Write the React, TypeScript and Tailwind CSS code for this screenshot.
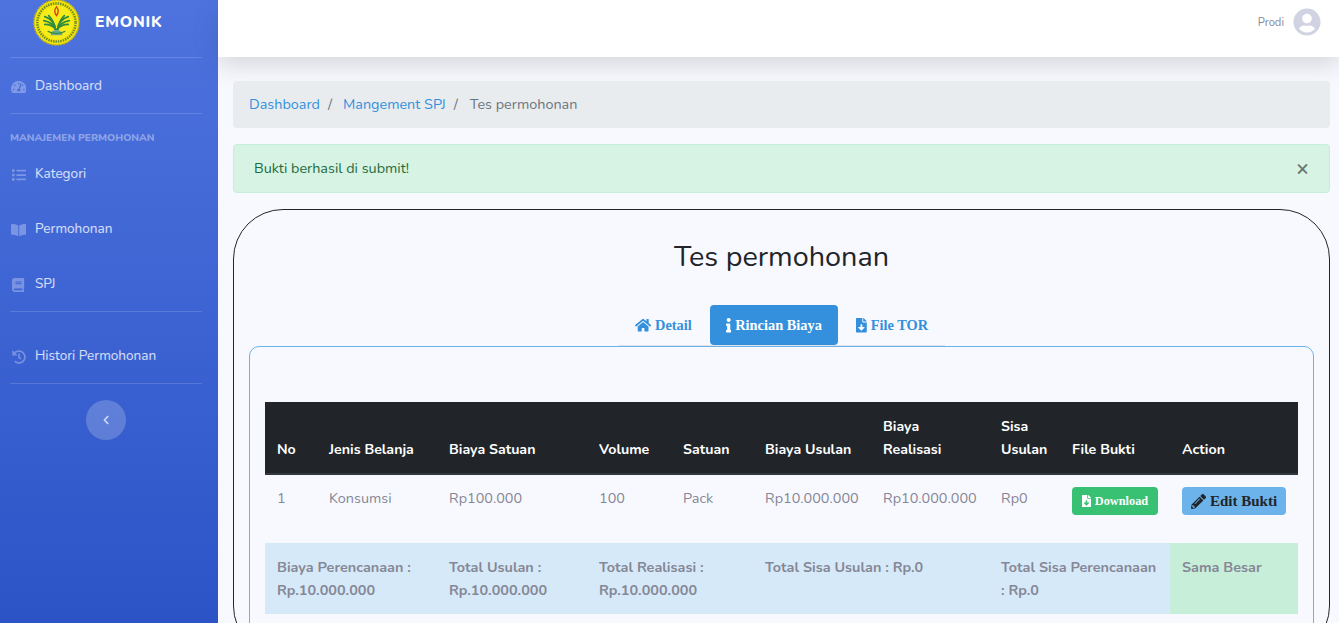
import {
  FaBook,
  FaBookOpen,
  FaChevronLeft,
  FaFileDownload,
  FaHistory,
  FaHome,
  FaInfo,
  FaList,
  FaPencilAlt,
  FaTachometerAlt,
  FaUserCircle,
} from 'react-icons/fa'
import type { ReactNode } from 'react'

function Logo() {
  return (
    <svg viewBox="0 0 48 48" className="h-[47px] w-[47px] shrink-0">
      <circle cx="24" cy="24" r="23" fill="#f2e60c" stroke="#c4b40c" strokeWidth="1.5" strokeDasharray="2 1" />
      <circle cx="24" cy="24" r="19.5" fill="none" stroke="#6f8a2a" strokeWidth="2.5" strokeDasharray="1.5 1" />
      <circle cx="24" cy="24" r="17" fill="#f7ec1a" />
      <path d="M24 8c-2.5 3-2.5 5.5 0 9 2.500-3.500 2.500-6 0-9z" fill="#f7ec1a" stroke="#d8401f" strokeWidth="1.4" />
      <g stroke="#2f8c3c" strokeWidth="1.8" fill="none" strokeLinecap="round">
        <path d="M23 31c-1-6-5-11-11-13" />
        <path d="M23 31c-2-5-6-8-12-9" />
        <path d="M23 31c-2-3-6-5-11-5" />
        <path d="M23 31c-1-5-3-10-7-14" />
        <path d="M25 31c1-6 5-11 11-13" />
        <path d="M25 31c2-5 6-8 12-9" />
        <path d="M25 31c2-3 6-5 11-5" />
        <path d="M25 31c1-5 3-10 7-14" />
      </g>
      <path d="M18 37c0-7 12-7 12 0z" fill="#6fa88f" />
      <path d="M15 33c5 3 13 3 18 0" stroke="#2f8c3c" strokeWidth="1.2" fill="none" />
    </svg>
  )
}

function NavItem({ icon, label }: { icon: ReactNode; label: string }) {
  return (
    <div className="flex h-[55px] items-center pl-[11px] pt-[2px] text-[13.6px] text-white/80">
      <span className="mr-[9px] flex w-[15px] justify-center text-white/30">{icon}</span>
      <span>{label}</span>
    </div>
  )
}

function Divider() {
  return <hr className="ml-[10px] mr-[16px] border-t border-white/15" />
}

function Sidebar() {
  return (
    <aside className="flex h-full w-[218px] shrink-0 flex-col bg-gradient-to-b from-[#4e73df] to-[#2d54c7]">
      <div className="flex h-[57px] items-center pb-[13px] pl-[33px]">
        <Logo />
        <span className="ml-[15px] pt-[2px] text-[15.6px] font-extrabold tracking-[0.8px] text-white">EMONIK</span>
      </div>
      <Divider />
      <NavItem icon={<FaTachometerAlt className="h-[14px] w-[15.5px] shrink-0" />} label="Dashboard" />
      <Divider />
      <div className="pb-px pl-[10px] pt-[17px] text-[10.24px] font-extrabold uppercase leading-[14px] text-white/40">
        Manajemen Permohonan
      </div>
      <NavItem icon={<FaList className="h-[14px] w-[14px] shrink-0" />} label="Kategori" />
      <NavItem icon={<FaBookOpen className="h-[14px] w-[15.5px] shrink-0" />} label="Permohonan" />
      <NavItem icon={<FaBook className="h-[14px] w-[12.2px] shrink-0" />} label="SPJ" />
      <Divider />
      <div className="mt-4">
        <NavItem icon={<FaHistory className="h-[14px] w-[14px] shrink-0" />} label="Histori Permohonan" />
      </div>
      <Divider />
      <div className="mt-4 flex justify-center pr-[6px]">
        <button className="flex h-10 w-10 items-center justify-center rounded-full bg-white/20 text-[10px] text-white/70">
          <FaChevronLeft />
        </button>
      </div>
    </aside>
  )
}

function Tab({ icon, label, active }: { icon: ReactNode; label: string; active?: boolean }) {
  return (
    <div
      className={
        active
          ? 'flex h-[40px] items-center gap-[4px] whitespace-nowrap rounded-[4px] bg-[#3490dc] px-4 pt-px text-white'
          : 'flex h-[40px] items-center gap-[4px] whitespace-nowrap px-[18px] pt-px text-[#3490dc]'
      }
    >
      {icon}
      {label}
    </div>
  )
}

const th = 'px-3 pb-[12px] pt-[13px] text-left align-bottom text-[14.2px] font-bold leading-[23px]'
const td = 'px-3 pt-[12px] pb-[28px] align-top leading-[23px]'
const tf = 'px-3 pt-[13px] pb-[12px] align-top font-bold leading-[23px]'

function CostTable() {
  return (
    <table className="w-full table-fixed border-collapse text-[14.4px] text-[#858796]">
      <colgroup>
        <col className="w-[52px]" />
        <col className="w-[120px]" />
        <col className="w-[150px]" />
        <col className="w-[84px]" />
        <col className="w-[82px]" />
        <col className="w-[118px]" />
        <col className="w-[118px]" />
        <col className="w-[71px]" />
        <col className="w-[110px]" />
        <col className="w-[128px]" />
      </colgroup>
      <thead>
        <tr className="border-b-2 border-[#32383e] bg-[#212529] text-white">
          <th className={th}>No</th>
          <th className={th}>Jenis Belanja</th>
          <th className={th}>Biaya Satuan</th>
          <th className={th}>Volume</th>
          <th className={th}>Satuan</th>
          <th className={th}>Biaya Usulan</th>
          <th className={th}>Biaya Realisasi</th>
          <th className={th}>Sisa Usulan</th>
          <th className={th}>File Bukti</th>
          <th className={th}>Action</th>
        </tr>
      </thead>
      <tbody>
        <tr>
          <td className={td}>1</td>
          <td className={td}>Konsumsi</td>
          <td className={td}>Rp100.000</td>
          <td className={td}>100</td>
          <td className={td}>Pack</td>
          <td className={td}>Rp10.000.000</td>
          <td className={td}>Rp10.000.000</td>
          <td className={td}>Rp0</td>
          <td className={td}>
            <button className="flex h-[28px] w-[86px] items-center justify-center gap-[4px] rounded-[4px] bg-[#38c172] font-['Liberation_Serif',serif] text-[12.3px] font-bold text-white">
              <FaFileDownload className="h-[12px] w-[9px] shrink-0" />
              Download
            </button>
          </td>
          <td className={td}>
            <button className="flex h-[28px] w-[104px] items-center justify-center gap-[4px] rounded-[4px] bg-[#6cb2eb] font-['Liberation_Serif',serif] text-[15px] font-bold text-[#212529]">
              <FaPencilAlt className="h-[15px] w-[15px] shrink-0" />
              Edit Bukti
            </button>
          </td>
        </tr>
        <tr className="bg-[#d6e9f8]">
          <td colSpan={2} className={tf}>Biaya Perencanaan : Rp.10.000.000</td>
          <td className={tf}>Total Usulan : Rp.10.000.000</td>
          <td colSpan={2} className={tf}>Total Realisasi : Rp.10.000.000</td>
          <td colSpan={2} className={tf}>Total Sisa Usulan : Rp.0</td>
          <td colSpan={2} className={tf}>Total Sisa Perencanaan : Rp.0</td>
          <td className={`${tf} bg-[#c7eed8]`}>Sama Besar</td>
        </tr>
      </tbody>
    </table>
  )
}

export default function App() {
  return (
    <div className="flex h-[623px] w-[1339px] overflow-hidden bg-[#f8f9fe] font-['Nunito','Noto_Sans',sans-serif] text-[14.4px]">
      <Sidebar />
      <div className="flex min-w-0 flex-1 flex-col">
        <header className="flex h-[57px] shrink-0 items-center justify-end bg-white pb-[14px] pr-[18px] shadow-[0_8px_24px_rgba(58,59,69,0.18)]">
          <span className="mr-[9px] pt-[3px] text-[11.2px] text-[#858796]">Prodi</span>
          <FaUserCircle className="h-7 w-7 text-[#d1d3e2]" />
        </header>
        <main className="flex-1 pl-[15px] pr-[9px] pt-6">
          <nav className="flex h-[47px] items-center rounded-[4px] bg-[#e9ecef] px-4 text-[#6c757d]">
            <span className="text-[#3490dc]">Dashboard</span>
            <span className="pl-2 pr-[11px]">/</span>
            <span className="text-[#3490dc]">Mangement SPJ</span>
            <span className="pl-2 pr-3">/</span>
            <span>Tes permohonan</span>
          </nav>
          <div className="mt-4 flex h-[49px] items-center justify-between rounded-[4px] border border-[#c7eed8] bg-[#d7f3e3] pl-5 pr-5 text-[#1f6b3d]">
            <span>Bukti berhasil di submit!</span>
            <span className="text-[21.6px] font-bold leading-none text-[#000]/50">×</span>
          </div>
          <section className="mt-4 rounded-[50px] border border-[#212529] px-[15px] pt-[27px]">
            <h1 className="text-center text-[28.8px] leading-[40px] text-[#212529]">Tes permohonan</h1>
            <div className="mt-[28px] flex justify-center">
              <div className="flex h-[41px] w-[327px] justify-center border-b border-[#dee2e6] font-['Liberation_Serif',serif] font-bold">
                <Tab icon={<FaHome className="h-[14.4px] w-[16.2px] shrink-0" />} label="Detail" />
                <Tab icon={<FaInfo className="h-[14.4px] w-[5.4px] shrink-0" />} label="Rincian Biaya" active />
                <Tab icon={<FaFileDownload className="h-[14.4px] w-[10.8px] shrink-0" />} label="File TOR" />
              </div>
            </div>
            <div className="rounded-[10px] border border-[#6cb2eb] px-[15px] pb-10 pt-[55px]">
              <CostTable />
            </div>
          </section>
        </main>
      </div>
    </div>
  )
}
